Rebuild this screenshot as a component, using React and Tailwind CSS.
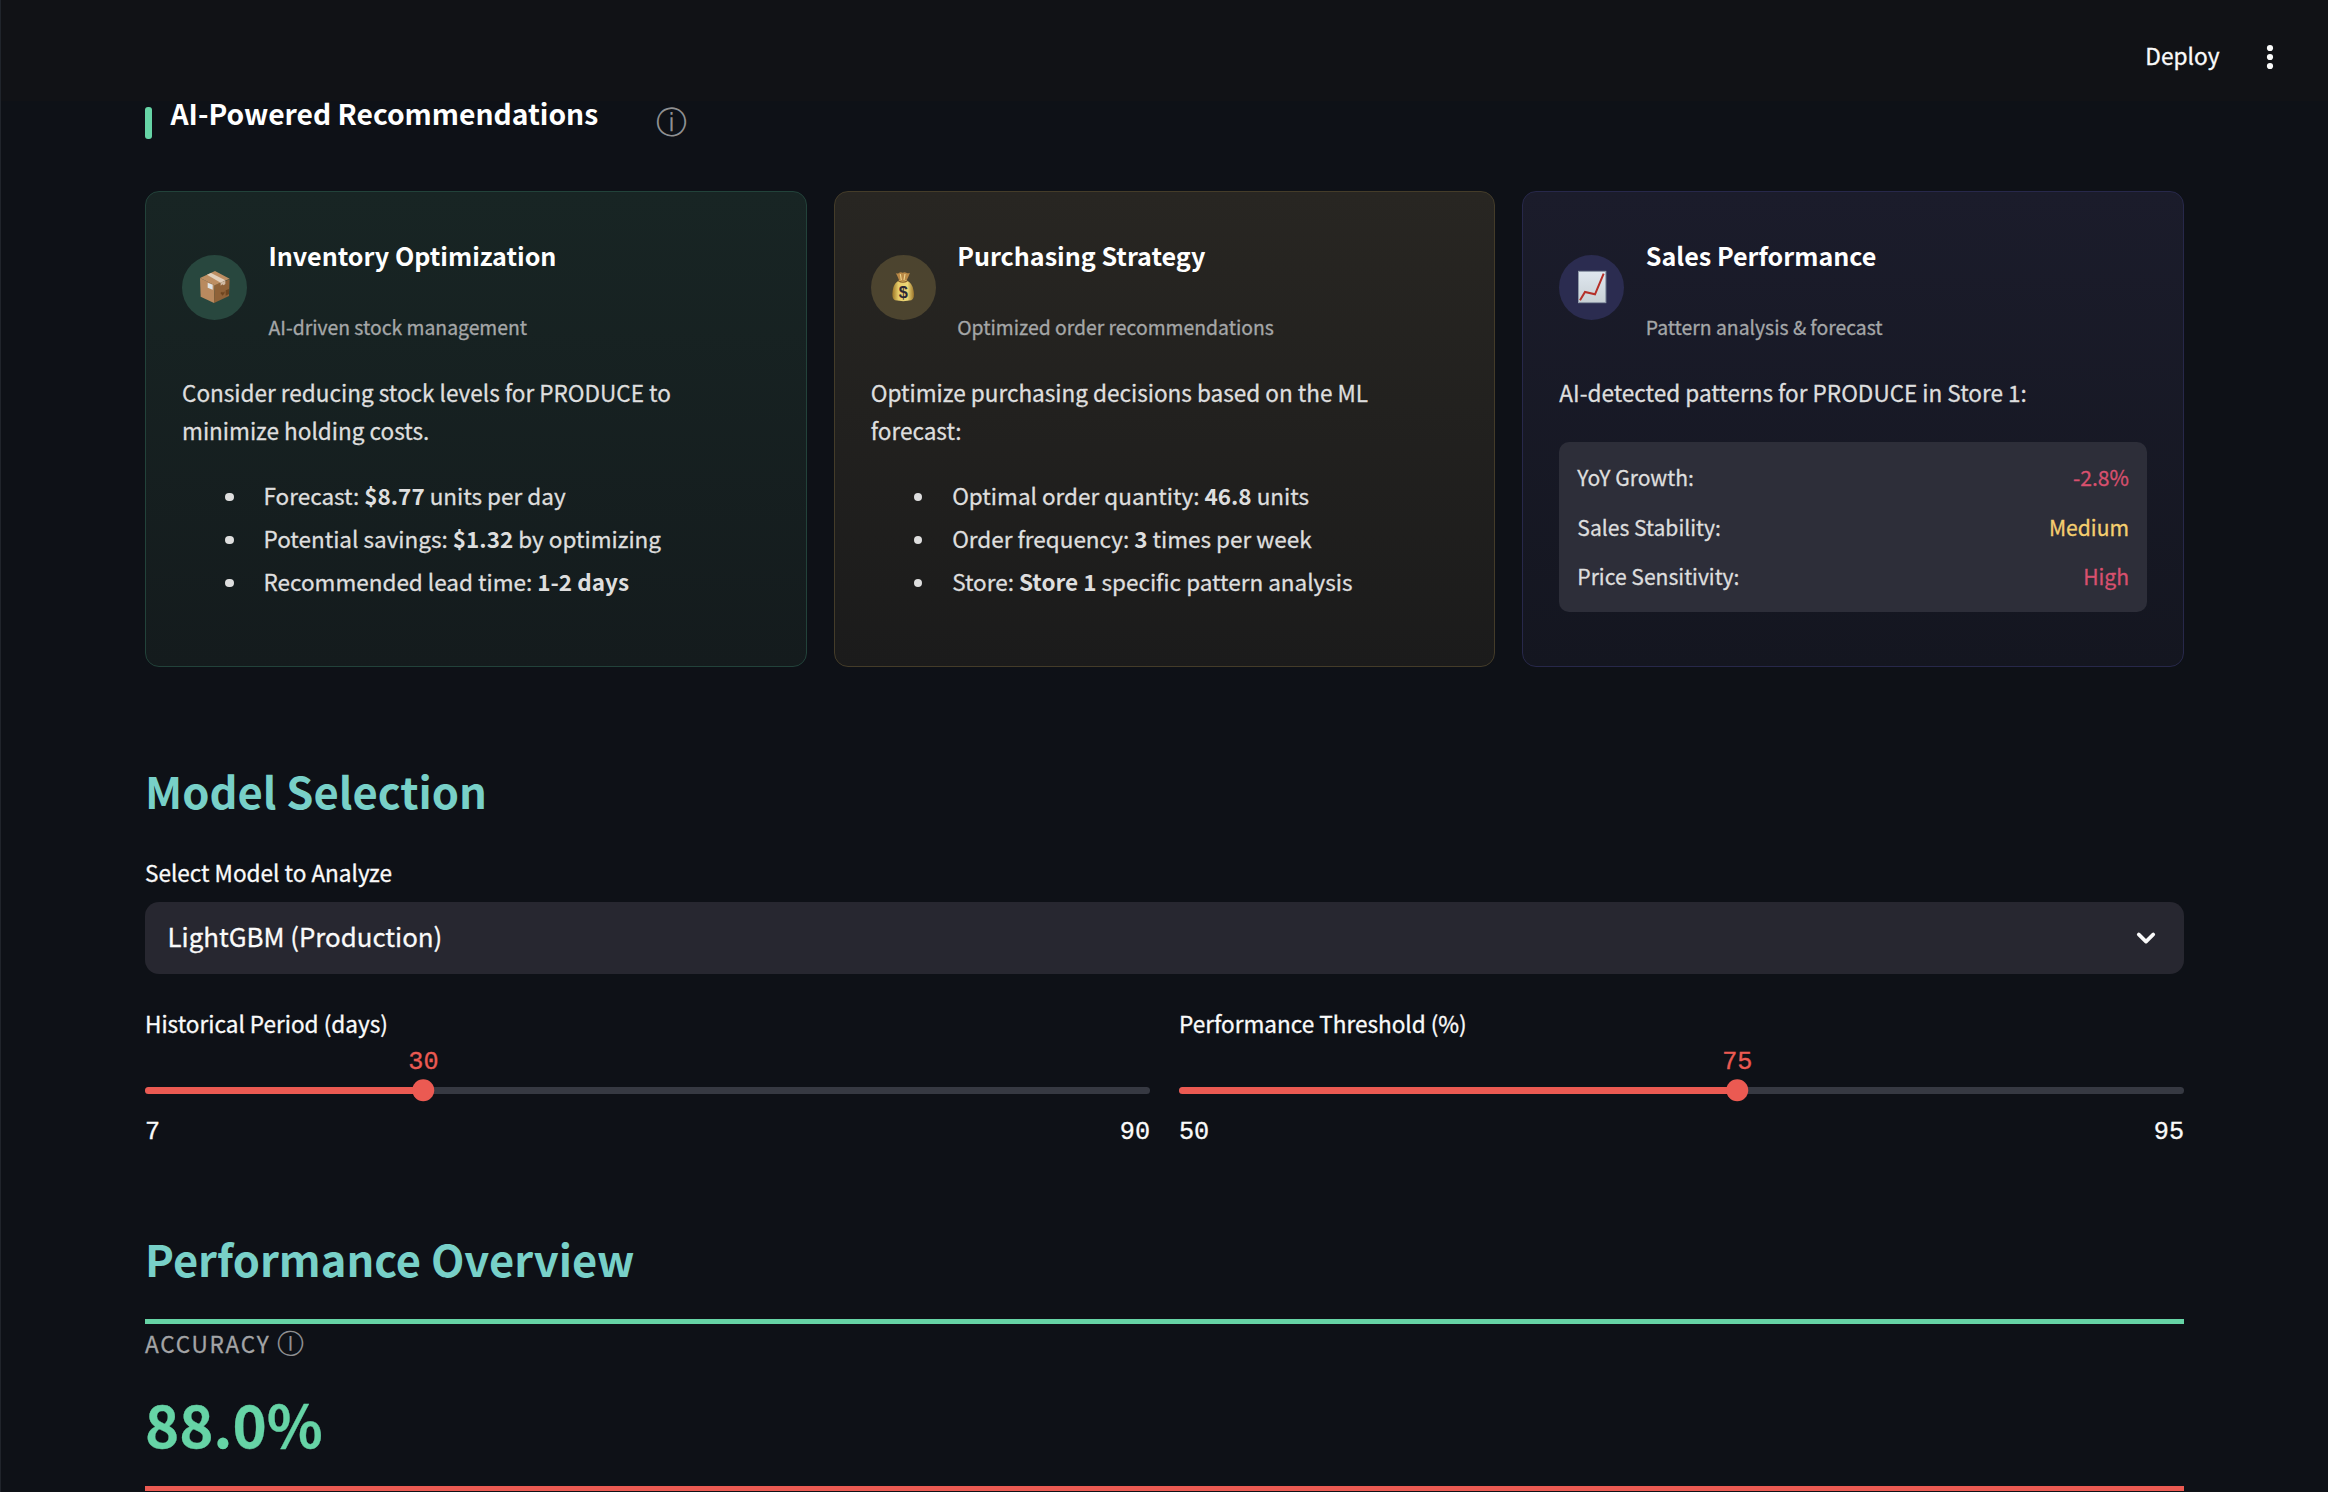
function BoxIcon() {
  return (
    <svg viewBox="0 0 195 195" className="size-[65px]">
      <path d="M54 69 L98 90 L96 144 L56 125 Z" fill="#b98a5f" />
      <path d="M98 90 L143 73 L141 123 L96 144 Z" fill="#8f6238" />
      <path d="M54 69 L99 48 L143 71 L98 91 Z" fill="#bd8e62" />
      <path d="M75 59 L87 54 L130 76 L116 83 Z" fill="#e2d0bc" />
      <path d="M116 83 L130 77 L130 87 L125 91 L121 88 L116 92 Z" fill="#d0bba4" />
      <path d="M77 83 L92 89 L92 104 L77 98 Z" fill="#dfe3e4" />
      <path d="M115 114 l5 -4 l3 3 l4 -4 l1 5 l-6 8 z M131 106 l10 -4 v15 l-10 5 z" fill="#6d4520" />
    </svg>
  );
}

function MoneyIcon() {
  return (
    <svg viewBox="0 0 195 195" className="size-[65px]">
      <defs>
        <linearGradient id="bag" x1="0" x2="1">
          <stop offset="0" stopColor="#9a7426" />
          <stop offset="0.28" stopColor="#e6cc68" />
          <stop offset="0.7" stopColor="#edd777" />
          <stop offset="1" stopColor="#9b742b" />
        </linearGradient>
      </defs>
      <path d="M74 53 Q80 58 84 53 Q90 50 95 53 Q101 50 106 53 Q111 57 117 53 Q112 66 106 78 H85 Q80 64 74 53 Z" fill="#b98845" />
      <path d="M88 57 L91 75 M102 57 L99 75" stroke="#ecd28a" strokeWidth="3.5" />
      <path d="M85 76 Q96 80 106 76 Q125 84 128 108 Q132 131 121 136 Q97 141 72 136 Q61 130 65 107 Q68 84 85 76 Z" fill="url(#bag)" />
      <path d="M82 78 Q96 85 109 78" stroke="#8a5e2b" strokeWidth="4" fill="none" />
      <text x="97" y="128" textAnchor="middle" fontSize="49" fontWeight="700" fill="#2d2734" className="font-['Liberation_Sans']">$</text>
    </svg>
  );
}

function ChartIcon() {
  return (
    <svg viewBox="0 0 195 195" className="size-[65px]">
      <defs>
        <linearGradient id="sheet" x1="0" y1="0" x2="0" y2="1">
          <stop offset="0" stopColor="#dfe7ef" />
          <stop offset="1" stopColor="#c8d0d5" />
        </linearGradient>
      </defs>
      <rect x="58.5" y="49" width="82" height="94" fill="url(#sheet)" stroke="#8e99a8" strokeWidth="3" />
      <path d="M63 136 L78 111 L108 118 L134 56" fill="none" stroke="#b52f28" strokeWidth="6" />
    </svg>
  );
}

function Card({ tone, disc, icon, title, subtitle, text, children }) {
  return (
    <section className={"h-[476px] rounded-[14px] border bg-linear-to-b px-[36px] pt-[43px] " + tone}>
      <div className="flex items-center gap-[21.5px]">
        <div className={"-mt-[2px] size-[65px] shrink-0 rounded-full " + disc}>{icon}</div>
        <div>
          <h3 className="text-[25.1px] leading-[40px] font-bold text-white [-webkit-text-stroke:0px]">{title}</h3>
          <p className="mt-[36.5px] text-[19.35px] leading-[30px] text-[#a5a7a8]">{subtitle}</p>
        </div>
      </div>
      <p className="mt-[31.5px] text-[22.55px] leading-[38.2px]">{text}</p>
      {children}
    </section>
  );
}

function Bullets({ items }) {
  return (
    <ul className="mt-[25px] pl-[43px] text-[22.5px] leading-[43px]">
      {items.map(([before, strong, after]) => (
        <li key={before} className="flex items-center gap-[30px]">
          <span className="mt-[2px] size-[8.5px] shrink-0 rounded-full bg-[#dedede]" />
          <span>{before} <b className="font-bold [-webkit-text-stroke:0px]">{strong}</b>{after}</span>
        </li>
      ))}
    </ul>
  );
}

function Slider({ label, value, min, max }) {
  const pct = ((value - min) / (max - min)) * 100 + "%";
  return (
    <div className="flex-1">
      <div className="text-[22.55px] leading-[36px]">{label}</div>
      <div className="mt-[7px] h-[30px] font-['Liberation_Mono',monospace] text-[25.2px] leading-[30px] text-[#eb5a52]">
        <span className="inline-block -translate-x-1/2" style={{ marginLeft: pct }}>{value}</span>
      </div>
      <div className="relative mt-[9px] h-[7px] rounded-full bg-[#363942]">
        <div className="h-full rounded-full bg-[#eb5a52]" style={{ width: pct }} />
        <div className="absolute top-[3px] size-[21.5px] -translate-1/2 rounded-full bg-[#eb5a52]" style={{ left: pct }} />
      </div>
      <div className="mt-[24px] flex h-[29px] justify-between font-['Liberation_Mono',monospace] text-[25.2px] leading-[30px]">
        <span>{min}</span>
        <span>{max}</span>
      </div>
    </div>
  );
}

const stats = [
  ["YoY Growth:", "-2.8%", "text-[#d8506e]"],
  ["Sales Stability:", "Medium", "text-[#f5cf6f]"],
  ["Price Sensitivity:", "High", "text-[#d8506e]"],
];

export default function App() {
  return (
    <div className="h-[1492px] w-[2328px] overflow-hidden border-l border-[#20242b] bg-[#0e1117] font-['Noto_Sans_CJK_SC',sans-serif] text-[#fafafa] [-webkit-text-stroke:0.3px]">
      <header className="flex h-[101px] items-start justify-end bg-[#111216] pr-[51px]">
        <span className="mt-[38px] text-[22.7px] leading-[36px]">Deploy</span>
        <svg viewBox="0 0 14 28" className="mt-[43px] ml-[43.5px] h-[28px] w-[14px]" fill="#fafafa">
          <circle cx="7" cy="5" r="3.1" />
          <circle cx="7" cy="14" r="3.1" />
          <circle cx="7" cy="23" r="3.1" />
        </svg>
      </header>

      <main className="pr-[144px] pl-[144px]">
        <div className="flex h-[90px] items-start">
          <div className="mt-[6px] h-[32px] w-[7px] rounded-[3px] bg-[#66d4a6]" />
          <h2 className="ml-[18.5px] text-[28.25px] leading-[24px] font-bold text-white [-webkit-text-stroke:0px]">AI-Powered Recommendations</h2>
          <span className="ml-[57.5px] font-['DejaVu_Sans'] text-[31px] leading-[42px] text-[#8f9092] [-webkit-text-stroke:0px]">ⓘ</span>
        </div>

        <div className="grid grid-cols-3 gap-[27px] text-[#dedede]">
          <Card tone="border-[#22423a] from-[#182524] to-[#141b1d]" disc="bg-[#28473e]" icon={<BoxIcon />} title="Inventory Optimization" subtitle="AI-driven stock management"
            text={<>Consider reducing stock levels for PRODUCE to<br />minimize holding costs.</>}>
            <Bullets items={[["Forecast:", "$8.77", " units per day"], ["Potential savings:", "$1.32", " by optimizing"], ["Recommended lead time:", "1-2 days", ""]]} />
          </Card>
          <Card tone="border-[#443c29] from-[#282622] to-[#1b1b1b]" disc="bg-[#4c442f]" icon={<MoneyIcon />} title="Purchasing Strategy" subtitle="Optimized order recommendations"
            text={<>Optimize purchasing decisions based on the ML<br />forecast:</>}>
            <Bullets items={[["Optimal order quantity:", "46.8", " units"], ["Order frequency:", "3", " times per week"], ["Store:", "Store 1", " specific pattern analysis"]]} />
          </Card>
          <Card tone="border-[#27284a] from-[#1b1c2b] to-[#141620]" disc="bg-[#2b2c50]" icon={<ChartIcon />} title="Sales Performance" subtitle="Pattern analysis & forecast"
            text="AI-detected patterns for PRODUCE in Store 1:">
            <div className="mt-[31px] h-[170px] rounded-[10px] bg-[#2d2e39] px-[18px] pt-[11px] text-[21.1px] leading-[49.3px]">
              {stats.map(([k, v, c]) => (
                <div key={k} className="flex justify-between">
                  <span>{k}</span>
                  <span className={c}>{v}</span>
                </div>
              ))}
            </div>
          </Card>
        </div>

        <h1 className="mt-[93px] text-[43.55px] leading-[60px] font-bold text-[#78d0c8] [-webkit-text-stroke:0px]">Model Selection</h1>
        <div className="mt-[34px] text-[22.55px] leading-[36px]">Select Model to Analyze</div>
        <div className="mt-[12px] flex h-[72px] items-center justify-between rounded-[14px] bg-[#272730] pr-[26px] pl-[22.5px] text-[25.85px]">
          <span className="-mt-[4px] leading-[68px]">LightGBM (Production)</span>
          <svg viewBox="0 0 24 24" className="-mt-px size-[24px]" fill="none" stroke="#fafafa" strokeWidth="3.6" strokeLinecap="round" strokeLinejoin="round">
            <path d="M4.7 8.4 L12 15.6 L19.3 8.4" />
          </svg>
        </div>

        <div className="mt-[31px] flex gap-[29px]">
          <Slider label="Historical Period (days)" value={30} min={7} max={90} />
          <Slider label="Performance Threshold (%)" value={75} min={50} max={95} />
        </div>

        <h1 className="mt-[82px] text-[43.45px] leading-[60px] font-bold text-[#78d0c8] [-webkit-text-stroke:0px]">Performance Overview</h1>
        <div className="mt-[30px] h-[5px] bg-[#66d4a6]" />
        <div className="mt-[5px] flex h-[29px] items-start gap-[6px] text-[22.6px] leading-[30px] text-[#a3a4a6]">
          <span className="tracking-[1.75px]">ACCURACY</span>
          <span className="font-['DejaVu_Sans'] text-[27px] leading-[30px] text-[#8f9092] [-webkit-text-stroke:0px]">Ⓘ</span>
        </div>
        <div className="mt-[30px] text-[58.1px] leading-[70px] font-bold text-[#66d4a6]">88.0%</div>
        <div className="mt-[28px] h-[5px] bg-[#eb5a52]" />
      </main>
    </div>
  );
}
